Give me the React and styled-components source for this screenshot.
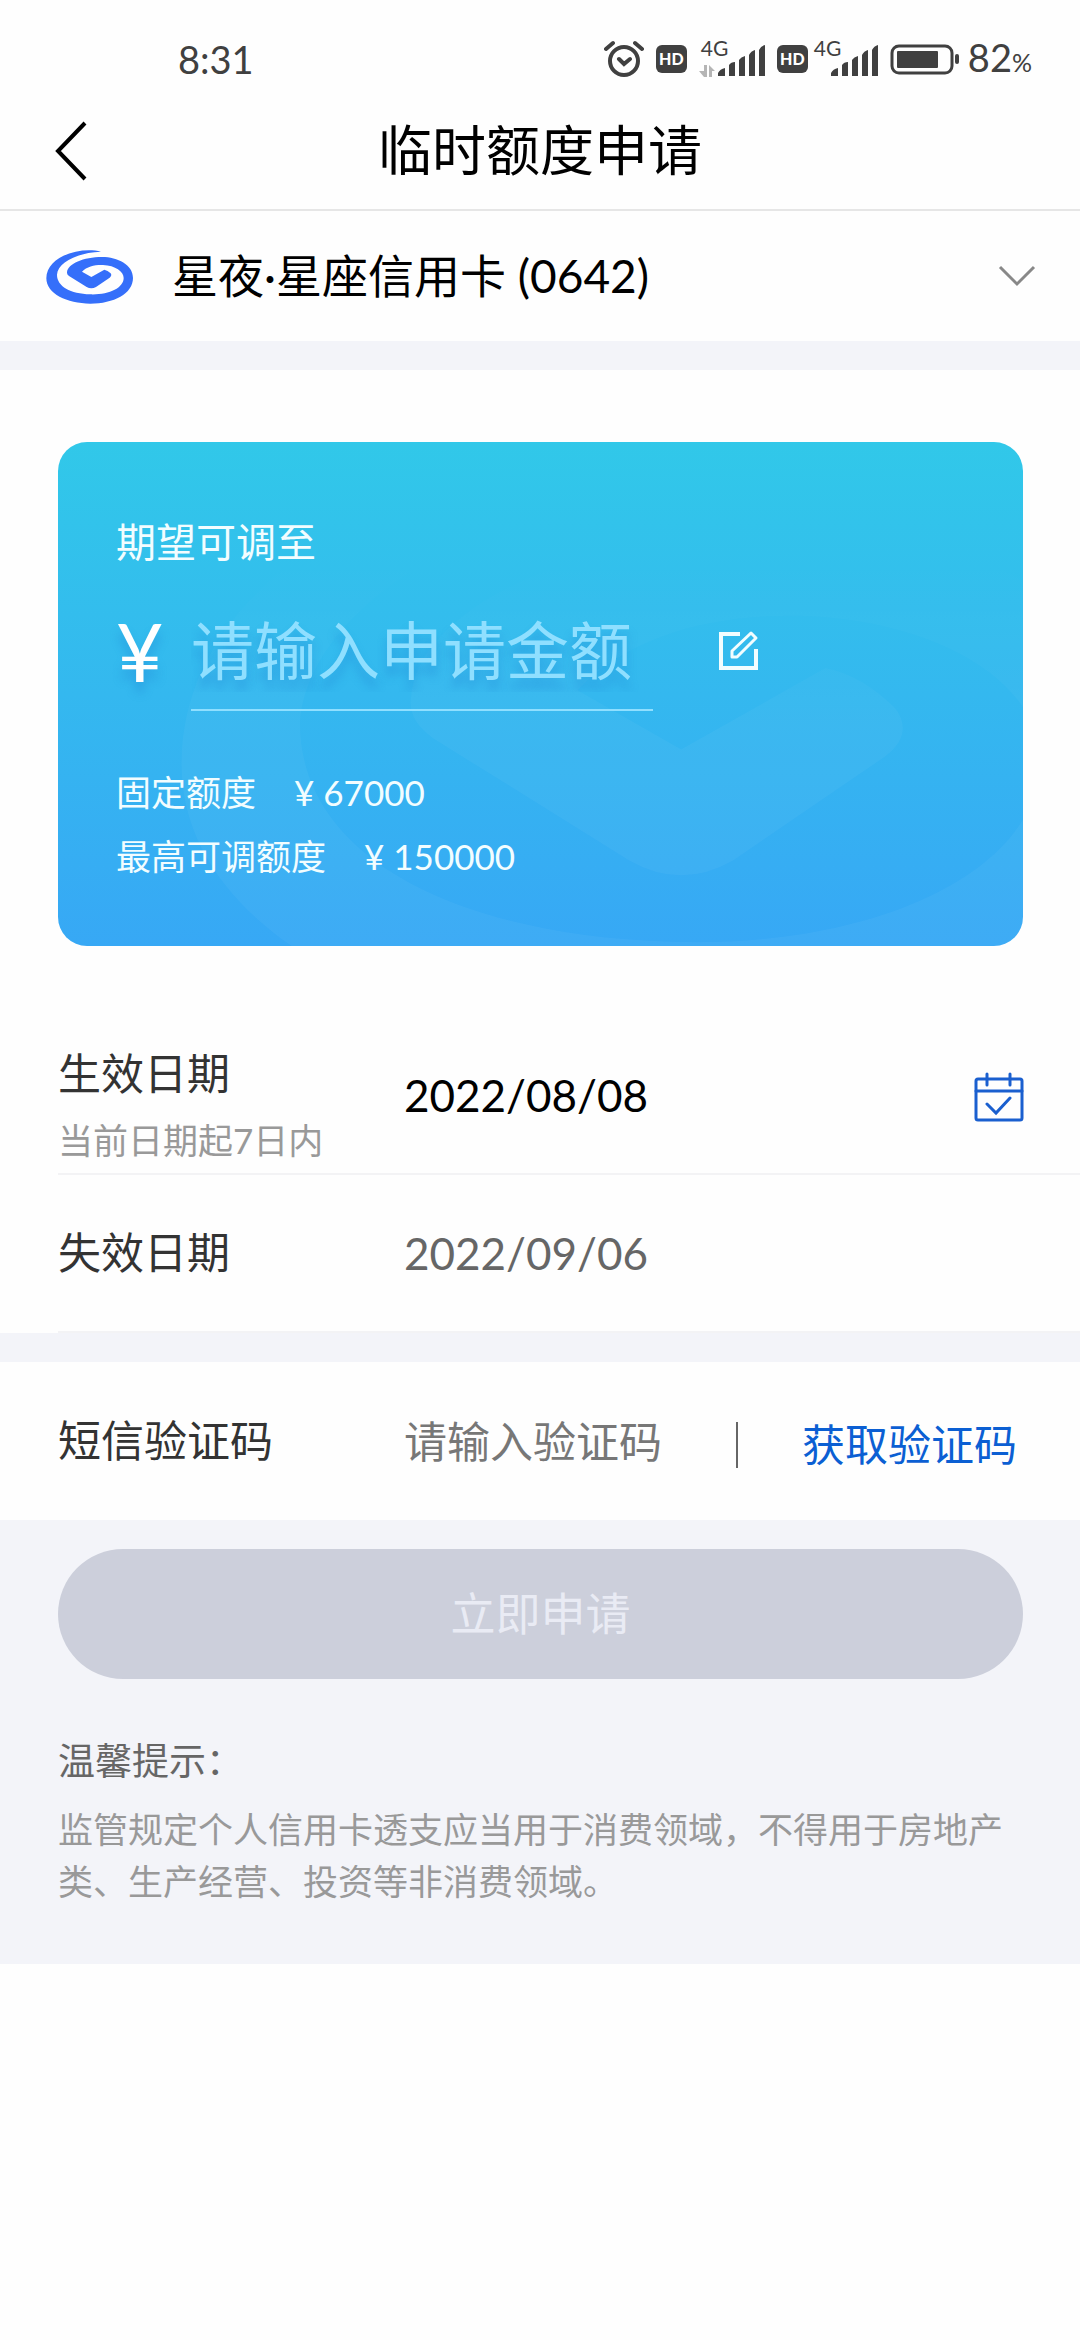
import React, { useState } from "react";
import styled, { createGlobalStyle } from "styled-components";

const GlobalStyle = createGlobalStyle`
  * {
    box-sizing: border-box;
  }
  body {
    margin: 0;
    background-color: #fefefe;
    color: #333333;
    font-family: Lato, "Noto Sans CJK SC", sans-serif;
    font-weight: 400;
  }
  button, input, select {
    padding: 0;
    border: none;
    border-radius: 0;
    outline: none;
    background: none;
    color: inherit;
    font: inherit;
  }
  button {
    cursor: pointer;
  }
  svg {
    display: block;
    flex: none;
  }
`;

const StatusBar = styled.div`
  display: flex;
  align-items: center;
  justify-content: space-between;
  height: 92px;
  padding: 26px 48px 0 178px;
  color: #404040;
`;

const Clock = styled.span`
  font-size: 38px;
  line-height: 72px;
`;

const StatusIcons = styled.div`
  display: flex;
  align-items: center;
  gap: 12px;
`;

const HdBadge = styled.span`
  width: 31px;
  height: 28px;
  border-radius: 6px;
  background-color: #404040;
  color: white;
  font-size: 16px;
  font-weight: 900;
  line-height: 28px;
  text-align: center;
`;

const Signal = styled.div`
  position: relative;
  display: flex;
  justify-content: flex-end;
  align-items: flex-end;
  width: ${(props) => (props.$wide ? "66px" : "58px")};
  height: 36px;
`;

const NetTag = styled.span`
  position: absolute;
  top: 0;
  left: ${(props) => (props.$wide ? "2px" : "-6px")};
  font-size: 21px;
  line-height: 14px;
`;

const Battery = styled.div`
  display: flex;
  align-items: center;
  gap: 4px;
  font-size: 38px;
  line-height: 72px;
  small {
    font-size: 25px;
  }
  svg {
    margin-right: 4px;
  }
`;

const Header = styled.header`
  display: grid;
  grid-template-columns: 96px 1fr 96px;
  align-items: center;
  height: 119px;
  border-bottom: 2px solid #e6e6e6;
`;

const BackButton = styled.button`
  display: flex;
  justify-content: flex-end;
  padding-right: 8px;
`;

const Title = styled.h1`
  margin: 0;
  color: black;
  font-size: 54px;
  font-weight: 400;
  line-height: 72px;
  text-align: center;
`;

const CardPicker = styled.div`
  display: flex;
  align-items: center;
  height: 130px;
  padding: 0 44px;
  color: black;
`;

const CardSelect = styled.select`
  flex: 1;
  margin-left: 38px;
  appearance: none;
  font-size: 46px;
  line-height: 72px;
`;

const Gap = styled.div`
  height: 29px;
  background-color: #f3f4f9;
`;

const QuotaCard = styled.section`
  position: relative;
  margin: 72px 57px 71px 58px;
  padding: 74px 58px 58px;
  border-radius: 29px;
  overflow: hidden;
  background: linear-gradient(#31c8e9, #37a8f5);
  color: #f2fdff;
`;

const Watermark = styled.svg`
  position: absolute;
  inset: 0;
  width: 100%;
  height: 100%;
`;

const CardBody = styled.div`
  position: relative;
`;

const CardLabel = styled.label`
  display: block;
  font-size: 40px;
  line-height: 52px;
`;

const AmountRow = styled.div`
  display: flex;
  align-items: center;
  margin: 14px 0 43px;
`;

const Yen = styled.span`
  width: 75px;
  color: white;
  font-size: 82px;
  line-height: 96px;
  text-shadow: 0 10px 10px rgba(30, 130, 210, 0.4);
`;

const AmountInput = styled.input`
  width: 462px;
  height: 135px;
  margin-right: 64px;
  background: linear-gradient(#8fdfff, #8fdfff) 0 127px / 100% 2px no-repeat;
  font-size: 63px;
  text-shadow: 0 10px 10px rgba(30, 130, 210, 0.4);
  &::placeholder {
    color: #8fdfff;
    opacity: 1;
  }
`;

const QuotaLine = styled.div`
  display: flex;
  gap: 38px;
  font-size: 35px;
  line-height: 64px;
`;

const Row = styled.div`
  display: flex;
  align-items: center;
  margin-left: 58px;
  padding-right: ${(props) => props.$end || "56px"};
  height: 158px;
  border-bottom: ${(props) => (props.$line ? "2px solid #f3f3f5" : "none")};
`;

const RowLabel = styled.label`
  display: block;
  width: 346px;
  padding-top: ${(props) => (props.$hinted ? "26px" : "0")};
  color: #333333;
  font-size: 43px;
  line-height: 64px;
`;

const Hint = styled.small`
  display: block;
  color: #999999;
  font-size: 35px;
  line-height: 68px;
`;

const RowInput = styled.input`
  flex: 1;
  min-width: 0;
  height: 64px;
  color: ${(props) => props.$color || "black"};
  font-size: ${(props) => (props.$code ? "43px" : "44px")};
  &::placeholder {
    color: #777777;
    opacity: 1;
  }
`;

const CodeButton = styled.button`
  display: flex;
  align-items: center;
  padding-top: 8px;
  color: #0b5fd3;
  font-size: 43px;
  line-height: 64px;
  &::before {
    content: "";
    width: 2px;
    height: 46px;
    margin-right: 64px;
    background-color: #666666;
  }
`;

const Footer = styled.footer`
  padding: 29px 57px 57px 58px;
  background-color: #f3f4f9;
`;

const SubmitButton = styled.button`
  width: 100%;
  height: 130px;
  border-radius: 65px;
  background-color: #cccfdb;
  color: #e9ebf4;
  font-size: 45px;
  line-height: 64px;
`;

const TipTitle = styled.h2`
  margin: 54px 0 14px;
  color: #666666;
  font-size: 37px;
  font-weight: 400;
  line-height: 56px;
`;

const TipText = styled.p`
  margin: 0;
  color: #999999;
  font-size: 35px;
  line-height: 52px;
`;

const swirl =
  "M212 66C150 50 48 80 48 146C48 192 110 222 180 222C250 222 308 192 308 145C308 105 262 82 215 82C160 82 112 102 110 128Q109 134 116 139L169 172Q183 180 197 172L238 144Q246 138 241 131Q232 122 222 120L183 142L155 126C170 110 195 105 218 106C255 108 280 125 280 145C280 175 235 196 180 194C120 192 80 170 80 135C82 100 140 68 212 66Z";

const BankLogo = () => (
  <svg width="90" height="56" viewBox="41 55 270 168" fill="#356ffa">
    <path d={swirl} />
  </svg>
);

const SignalBars = () => (
  <svg width="47" height="32" viewBox="0 0 47 32" fill="#404040">
    <path d="M0 31V28Q2 24 7 23V31ZM11 31V20Q13 17 17 17V31ZM21 31V15Q23 12 27 11V31ZM31 31V10Q33 6 37 5V31ZM41 31V5Q43 1 47 0V31Z" />
  </svg>
);

const DataArrows = () => (
  <svg width="19" height="12" viewBox="0 0 19 12" fill="#b5b5b5">
    <path d="M5 0H8V12H5L0 6H5ZM10 12V0L16 6H13V12Z" />
  </svg>
);

const App = () => {
  const [amount, setAmount] = useState("");
  const [code, setCode] = useState("");

  return (
    <>
      <GlobalStyle />
      <StatusBar>
        <Clock>8:31</Clock>
        <StatusIcons>
          <svg width="40" height="38" viewBox="0 0 40 38" fill="none" stroke="#404040" strokeWidth="4" strokeLinecap="round">
            <circle cx="20" cy="21" r="14" />
            <path d="M2 9L9 3M38 9L31 3M15 19L20 24L26 19" />
          </svg>
          <HdBadge>HD</HdBadge>
          <Signal $wide>
            <NetTag $wide>4G</NetTag>
            <DataArrows />
            <SignalBars />
          </Signal>
          <HdBadge>HD</HdBadge>
          <Signal>
            <NetTag>4G</NetTag>
            <SignalBars />
          </Signal>
          <Battery>
            <svg width="70" height="31" viewBox="0 0 70 31" fill="none" stroke="#404040" strokeWidth="3">
              <rect x="2" y="2" width="60" height="27" rx="7" />
              <rect x="7" y="7" width="41" height="17" rx="1" fill="#404040" stroke="none" />
              <rect x="65" y="10" width="4" height="10" rx="2" fill="#404040" stroke="none" />
            </svg>
            <span>
              82<small>%</small>
            </span>
          </Battery>
        </StatusIcons>
      </StatusBar>

      <Header>
        <BackButton aria-label="返回">
          <svg width="34" height="60" viewBox="0 0 34 60" fill="none" stroke="black" strokeWidth="4">
            <path d="M31 2L4 30L31 58" />
          </svg>
        </BackButton>
        <Title>临时额度申请</Title>
      </Header>

      <CardPicker>
        <BankLogo />
        <CardSelect aria-label="信用卡">
          <option>星夜·星座信用卡 (0642)</option>
        </CardSelect>
        <svg width="38" height="24" viewBox="0 0 38 24" fill="none" stroke="#888888" strokeWidth="3">
          <path d="M2 3L19 20L36 3" />
        </svg>
      </CardPicker>
      <Gap />

      <QuotaCard>
        <Watermark viewBox="0 0 965 504" preserveAspectRatio="xMidYMid slice">
          <defs>
            <linearGradient id="fade" x1="0" y1="100" x2="0" y2="300" gradientUnits="userSpaceOnUse">
              <stop offset="0" stopColor="white" stopOpacity="0" />
              <stop offset="1" stopColor="white" stopOpacity="0.04" />
            </linearGradient>
            <mask id="top" maskUnits="userSpaceOnUse" x="0" y="0" width="965" height="504">
              <rect width="965" height="504" fill="url(#fade)" />
            </mask>
          </defs>
          <g mask="url(#top)">
            <path d={swirl} fill="white" transform="translate(-54 -218) scale(3.7)" />
          </g>
        </Watermark>
        <CardBody>
          <CardLabel htmlFor="amount">期望可调至</CardLabel>
          <AmountRow>
            <Yen>¥</Yen>
            <AmountInput
              id="amount"
              placeholder="请输入申请金额"
              value={amount}
              onChange={(e) => setAmount(e.target.value)}
            />
            <button aria-label="编辑">
              <svg width="42" height="42" viewBox="0 0 42 42" fill="none" stroke="#f2fdff" strokeWidth="4">
                <path d="M23 5H4V39H39V20" />
                <path d="M15 28V22L34 4L39 9L20 28Z" strokeWidth="3" strokeLinejoin="round" />
              </svg>
            </button>
          </AmountRow>
          <QuotaLine>
            <span>固定额度</span>
            <span>¥ 67000</span>
          </QuotaLine>
          <QuotaLine>
            <span>最高可调额度</span>
            <span>¥ 150000</span>
          </QuotaLine>
        </CardBody>
      </QuotaCard>

      <Row $line>
        <RowLabel htmlFor="start" $hinted>
          生效日期
          <Hint>当前日期起7日内</Hint>
        </RowLabel>
        <RowInput id="start" readOnly value="2022/08/08" />
        <button aria-label="选择日期">
          <svg width="50" height="54" viewBox="0 -4 50 54" fill="none" stroke="#1a5fcf" strokeWidth="3" strokeLinecap="round">
            <rect x="2" y="7" width="46" height="41" rx="2" />
            <path d="M2 19H48M13 2V13M36 2V13M13 32L22 41L36 26" />
          </svg>
        </button>
      </Row>
      <Row $line>
        <RowLabel htmlFor="end">失效日期</RowLabel>
        <RowInput id="end" readOnly value="2022/09/06" $color="#666666" />
      </Row>
      <Gap />
      <Row $end="63px">
        <RowLabel htmlFor="code">短信验证码</RowLabel>
        <RowInput
          id="code"
          $code
          placeholder="请输入验证码"
          value={code}
          onChange={(e) => setCode(e.target.value)}
        />
        <CodeButton>获取验证码</CodeButton>
      </Row>

      <Footer>
        <SubmitButton disabled>立即申请</SubmitButton>
        <TipTitle>温馨提示：</TipTitle>
        <TipText>
          监管规定个人信用卡透支应当用于消费领域，不得用于房地产类、生产经营、投资等非消费领域。
        </TipText>
      </Footer>
    </>
  );
};

export default App;
